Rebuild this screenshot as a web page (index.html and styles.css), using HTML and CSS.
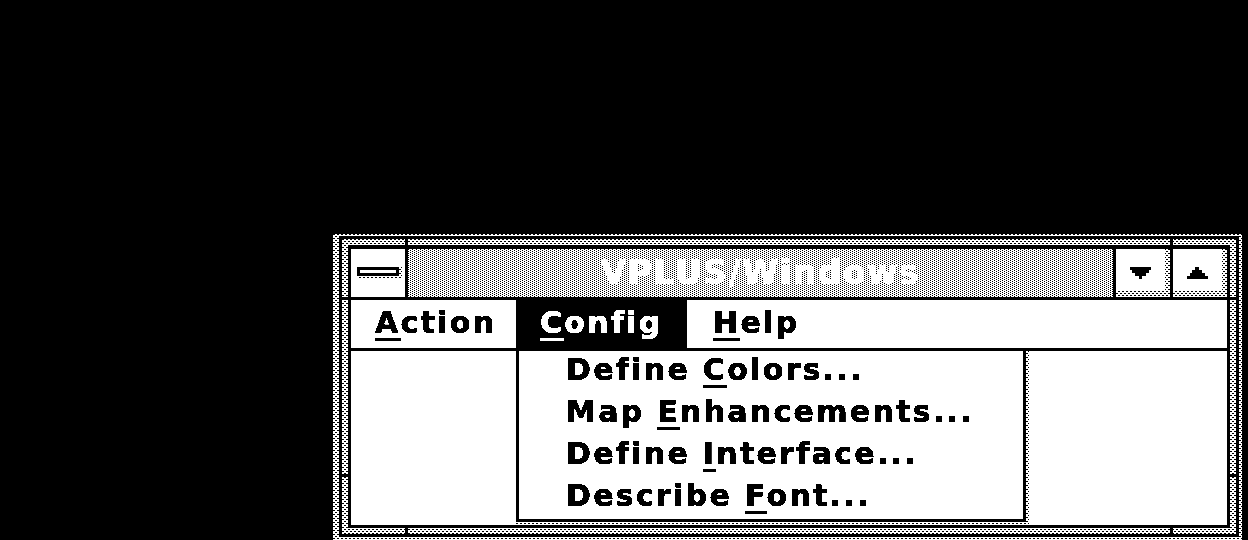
FILE: index.html
```html
<!DOCTYPE html>
<html lang="en">

<head>
    <meta charset="UTF-8">
    <title>VPLUS/Windows</title>
    <link rel="stylesheet" href="styles.css">
</head>

<body>

    <div class="window dither">
        <div class="frame dither">
            <span class="tick tick-top tick-a"></span>
            <span class="tick tick-top tick-b"></span>
            <span class="tick tick-bottom tick-a"></span>
            <span class="tick tick-bottom tick-b"></span>
            <span class="tick tick-left tick-c"></span>
            <span class="tick tick-left tick-d"></span>
            <span class="tick tick-right tick-c"></span>
            <span class="tick tick-right tick-d"></span>

            <div class="client">
                <div class="titlebar">
                    <div class="sysbox">
                        <div class="sysicon dither">
                            <div class="sysbar"></div>
                        </div>
                    </div>
                    <div class="title dither-dark">VPLUS/Windows</div>
                    <div class="winbtn dither">
                        <div class="btnface">
                            <svg width="21" height="12" viewBox="0 0 21 12" shape-rendering="crispEdges">
                                <path d="M0 0H21V3H19V6H16V9H12V12H9V9H5V6H2V3H0Z" />
                            </svg>
                        </div>
                    </div>
                    <div class="winbtn dither">
                        <div class="btnface">
                            <svg width="21" height="12" viewBox="0 0 21 12" shape-rendering="crispEdges">
                                <path d="M8 0H12V3H15V6H18V9H21V12H0V9H3V6H5V3H8Z" />
                            </svg>
                        </div>
                    </div>
                </div>

                <div class="menubar">
                    <div class="menuitem item-action"><u>A</u>ction</div>
                    <div class="menuitem item-config active"><u>C</u>onfig</div>
                    <div class="menuitem item-help"><u>H</u>elp</div>
                </div>

                <!-- Config menu, open -->
                <div class="dropdown dither">
                    <div class="dropdown-inner">
                        <div class="dropitem">Define <u>C</u>olors...</div>
                        <div class="dropitem">Map <u>E</u>nhancements...</div>
                        <div class="dropitem">Define <u>I</u>nterface...</div>
                        <div class="dropitem">Describe <u>F</u>ont...</div>
                    </div>
                </div>
            </div>
        </div>
    </div>

</body>

</html>
```

FILE: styles.css
```css
html,
body {
    height: 100%;
}

body {
    margin: 0;
    padding: 234px 0 0 333px;
    box-sizing: border-box;
    background-color: #000;
    overflow: hidden;
    font-family: "DejaVu Sans", sans-serif;
    font-weight: bold;
}

/* 1-bit dither, light and dark */
.dither {
    background-color: #fff;
    background-image:
        conic-gradient(at 2px 1px, transparent 75%, #000 0),
        conic-gradient(at 2px 1px, transparent 75%, #000 0);
    background-size: 4px 4px;
    background-position: 0 0, 2px 2px;
}

.dither-dark {
    background-color: #fff;
    background-image:
        conic-gradient(at 1px 1px, transparent 75%, #000 0),
        conic-gradient(at 1px 1px, transparent 75%, #000 0);
    background-size: 4px 2px;
    background-position: 0 0, 2px 1px;
}

/* hard edges on the text, no grey */
.window {
    width: 909px;
    height: 306px;
    box-sizing: border-box;
    padding: 2px 3px 3px 6px;
    filter: contrast(30);
}

.frame {
    position: relative;
    height: 301px;
    box-sizing: border-box;
    border: 3px solid #000;
    padding: 6px;
}

.tick {
    position: absolute;
    background-color: #000;
}

.tick-top,
.tick-bottom {
    width: 3px;
    height: 6px;
}

.tick-left,
.tick-right {
    width: 6px;
    height: 3px;
}

.tick-top { top: 0; }
.tick-bottom { bottom: 0; }
.tick-left { left: 0; }
.tick-right { right: 0; }
.tick-a { left: 63px; }
.tick-b { left: 828px; }
.tick-c { top: 58px; }
.tick-d { top: 235px; }

.client {
    position: relative;
    height: 283px;
    box-sizing: border-box;
    border: 3px solid #000;
    border-top-width: 4px;
    background-color: #fff;
}

.titlebar {
    display: flex;
    height: 51px;
    box-sizing: border-box;
    border-bottom: 3px solid #000;
}

.sysbox {
    width: 54px;
    padding: 18px 0 0 6px;
    box-sizing: border-box;
    background-color: #fff;
}

.sysicon {
    width: 45px;
    height: 12px;
}

.sysbar {
    width: 36px;
    height: 3px;
    border: 3px solid #000;
    background-color: #fff;
}

.title {
    flex: 1;
    border-left: 3px solid #000;
    border-right: 3px solid #000;
    color: #fff;
    font-size: 33px;
    line-height: 48px;
    letter-spacing: 1.5px;
    text-align: center;
    -webkit-text-stroke: 0.5px #fff;
}

.winbtn {
    display: flex;
    width: 54px;
    border-right: 3px solid #000;
}

.winbtn:last-child {
    border-right: 0;
}

.btnface {
    flex: 1;
    display: flex;
    align-items: center;
    justify-content: center;
    margin: 0 5px 6px 0;
    padding-top: 6px;
    background-color: #fff;
}

.menubar {
    display: flex;
    height: 51px;
    box-sizing: border-box;
    border-bottom: 3px solid #000;
    font-size: 30px;
    line-height: 45px;
    letter-spacing: 2.3px;
    -webkit-text-stroke: 0.6px currentColor;
}

.menuitem {
    padding: 0 24px;
}

.item-action {
    width: 165px;
    box-sizing: border-box;
}

.item-config {
    width: 171px;
    box-sizing: border-box;
}

.item-help {
    padding-left: 26px;
}

.menuitem.active {
    background-color: #000;
    color: #fff;
}

u {
    text-decoration-thickness: 3px;
    text-underline-offset: 5px;
    text-decoration-skip-ink: none;
}

/* open menu, its shadow is the dither showing on two sides */
.dropdown {
    position: absolute;
    left: 165px;
    top: 102px;
    width: 513px;
    padding: 0 3px 3px 0;
    box-sizing: border-box;
}

.dropdown-inner {
    border: 3px solid #000;
    border-top: 0;
    background-color: #fff;
    padding-left: 47px;
    font-size: 30px;
    letter-spacing: 2.3px;
    -webkit-text-stroke: 0.6px #000;
}

.dropitem {
    height: 42px;
    line-height: 38px;
    white-space: nowrap;
}
```
